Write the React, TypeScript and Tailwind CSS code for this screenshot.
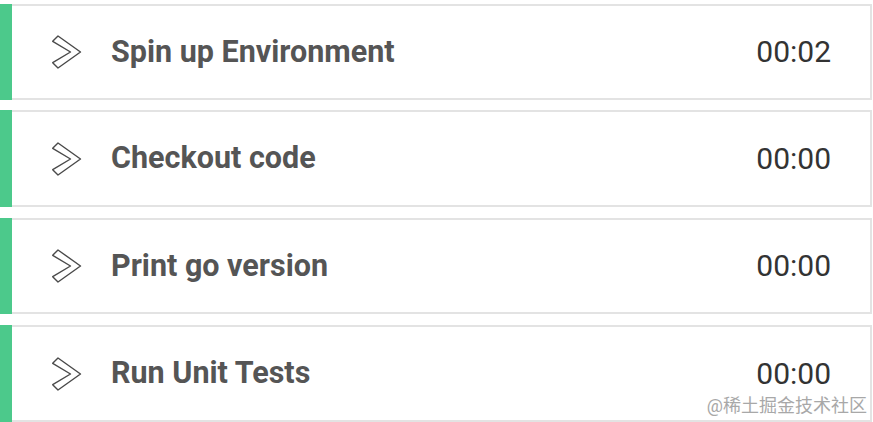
import React from "react";

const rows = [
  { title: "Spin up Environment", time: "00:02", cls: "mt-[4px] h-[96px]" },
  { title: "Checkout code", time: "00:00", cls: "mt-[10px] h-[97px]" },
  { title: "Print go version", time: "00:00", cls: "mt-[11px] h-[96px]" },
  { title: "Run Unit Tests", time: "00:00", cls: "mt-[11px] h-[97px]" },
];

function Chevron() {
  return (
    <svg width="33" height="36" viewBox="0 0 33 36" className="shrink-0">
      <path
        d="M8 2 L30.5 18 L8 34 L2.7 28.7 L20.5 18 L2.7 7.3 Z"
        fill="none"
        stroke="#4a4a4a"
        strokeWidth="1.4"
        strokeLinejoin="round"
      />
    </svg>
  );
}

export default function App() {
  return (
    <div
      className="relative w-[873px] h-[422px] bg-white flex flex-col overflow-hidden"
      style={{ fontFamily: "Roboto, 'Noto Sans CJK SC', sans-serif" }}
    >
      {rows.map((r) => (
        <div key={r.title} className={`${r.cls} w-[872px] shrink-0 flex`}>
          <div className="w-[12px] shrink-0 bg-[#4cc98b]" />
          <div className="flex-1 flex items-center border-y-2 border-r-2 border-[#e3e3e3] pl-[38px] pr-[39px]">
            <Chevron />
            <div className="ml-[28px] text-[30.5px] font-bold text-[#555555] leading-none">
              {r.title}
            </div>
            <div className="ml-auto text-[30px] text-[#333333] leading-none">
              {r.time}
            </div>
          </div>
        </div>
      ))}
      <div className="absolute right-[6px] bottom-[7px] text-[18px] text-[#a8a8a8] leading-none">
        @稀土掘金技术社区
      </div>
    </div>
  );
}
